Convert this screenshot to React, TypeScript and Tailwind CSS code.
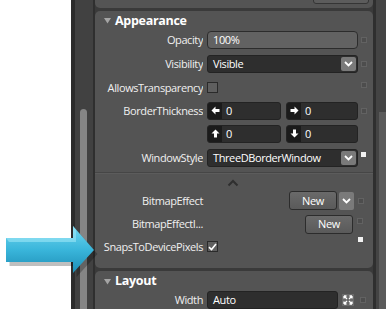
import type { ReactNode } from "react";

function Marker({ white = false }: { white?: boolean }) {
  return white ? (
    <div className="w-[5px] h-[5px] bg-[#f2f2f2]" />
  ) : (
    <div className="w-[6px] h-[6px] border border-[#626262] bg-[#4d4d4d]" />
  );
}

function Chevron({ className = "" }: { className?: string }) {
  return (
    <div className={`w-[15px] h-[14px] rounded-[2px] bg-[#7a7a7a] flex items-center justify-center ${className}`}>
      <svg width="9" height="6" viewBox="0 0 9 6">
        <path d="M1 1 L4.5 4.5 L8 1" stroke="#fff" strokeWidth="1.8" fill="none" />
      </svg>
    </div>
  );
}

function Row({ label, children, marker, className = "" }: { label: string; children?: ReactNode; marker?: ReactNode; className?: string }) {
  return (
    <div className={`flex items-center h-[18px] ${className}`}>
      <div className="w-[108px] text-right whitespace-nowrap overflow-hidden">{label}</div>
      <div className="ml-[4px] w-[151px] h-full flex items-center">{children}</div>
      <div className="ml-[3px] w-[6px] h-full flex items-center">{marker}</div>
    </div>
  );
}

function Arrow({ dir }: { dir: "l" | "r" | "u" | "d" }) {
  const rot = { l: 0, r: 180, u: 90, d: 270 }[dir];
  return (
    <svg width="9" height="9" viewBox="0 0 9 9" style={{ transform: `rotate(${rot}deg)` }}>
      <path d="M0.5 4.5 L4.5 0.5 L4.5 3 L8.5 3 L8.5 6 L4.5 6 L4.5 8.5 Z" fill="#fff" />
    </svg>
  );
}

function Thick({ dir, className = "" }: { dir: "l" | "r" | "u" | "d"; className?: string }) {
  return (
    <div className={`h-full flex rounded-[3px] border border-[#232323] bg-[#2e2e2e] overflow-hidden ${className}`}>
      <div className="w-[14px] h-full bg-[#1b1b1b] flex items-center justify-center">
        <Arrow dir={dir} />
      </div>
      <div className="pl-[4px] flex items-center text-white">0</div>
    </div>
  );
}

function NewButton({ className = "" }: { className?: string }) {
  return (
    <div className={`h-[19px] rounded-[3px] border border-[#2c2c2c] bg-gradient-to-b from-[#6a6a6a] to-[#5a5a5a] flex items-center justify-center text-white ${className}`}>
      New
    </div>
  );
}

function Header({ title, className = "" }: { title: string; className?: string }) {
  return (
    <div className={`flex items-center pl-[9px] ${className}`}>
      <svg width="7" height="7" viewBox="0 0 7 7" className="mr-[4px]">
        <path d="M0 1 L7 1 L3.5 6.5 Z" fill="#a5a5a5" />
      </svg>
      <span className="font-bold text-[12.5px] tracking-[-0.3px] text-white">{title}</span>
    </div>
  );
}

export default function App() {
  return (
    <div className="relative w-[386px] h-[309px] bg-white overflow-hidden flex font-['Open_Sans',sans-serif] text-[11px] tracking-[-0.4px] text-[#f0f0f0]">
      <div className="w-[71px] shrink-0" />

      {/* left scrollbar */}
      <div className="w-[24px] shrink-0 flex">
        <div className="w-[4px] bg-[#2c2c2c]" />
        <div className="w-[18px] bg-[#414141] flex justify-center">
          <div className="mt-[109px] w-[7px] h-[220px] rounded-t-[4px] bg-[#858585] ml-[-2px]" />
        </div>
        <div className="w-[2px] bg-[#2f2f2f]" />
      </div>

      {/* property panel */}
      <div className="w-[278px] shrink-0 bg-[#3a3a3a] flex flex-col">
        <div className="h-[8px] rounded-b-[5px] bg-[#545454] relative">
          <div className="absolute right-[4px] top-[-4px] w-[56px] h-[8px] rounded-[3px] border border-[#353535] bg-[#5c5c5c]" />
        </div>

        <div className="mt-[3px] h-[258px] rounded-[5px] bg-[#545454] flex flex-col">
          <Header title="Appearance" className="h-[20px]" />
          <Row label="Opacity" marker={<Marker />}>
            <div className="w-full h-full rounded-[4px] border border-[#2c2c2c] bg-[#626262] pl-[5px] flex items-center text-white">100%</div>
          </Row>
          <Row label="Visibility" marker={<Marker />} className="mt-[6px]">
            <div className="w-full h-full rounded-[3px] border border-[#232323] bg-[#2e2e2e] pl-[5px] pr-[1px] flex items-center justify-between text-white">
              Visible
              <Chevron />
            </div>
          </Row>
          <Row label="AllowsTransparency" marker={<div className="self-start mt-[3px]"><Marker /></div>} className="mt-[6px]">
            <div className="w-[11px] h-[11px] border border-[#2a2a2a] bg-[#5f5f5f]" />
          </Row>
          <Row label="BorderThickness" marker={<Marker />} className="mt-[5px]">
            <Thick dir="l" className="w-[74px]" />
            <Thick dir="r" className="w-[72px] ml-[5px]" />
          </Row>
          <Row label="" className="mt-[5px]">
            <Thick dir="u" className="w-[74px]" />
            <Thick dir="d" className="w-[72px] ml-[5px]" />
          </Row>
          <Row label="WindowStyle" marker={<div className="self-start mt-[3px]"><Marker white /></div>} className="mt-[6px]">
            <div className="w-full h-full rounded-[3px] border border-[#232323] bg-[#2e2e2e] pl-[5px] pr-[1px] flex items-center justify-between text-white">
              ThreeDBorderWindow
              <Chevron />
            </div>
          </Row>

          <div className="mt-[5px] h-[1px] bg-[#464646]" />
          <div className="h-[1px] bg-[#5c5c5c]" />
          <div className="h-[18px] flex items-center">
            <svg width="12" height="8" viewBox="0 0 12 8" className="ml-[132px]">
              <path d="M1.5 6.5 L6 2 L10.5 6.5" stroke="#2f2f2f" strokeWidth="2" fill="none" />
            </svg>
          </div>

          <div className="h-[18px] flex items-center">
            <div className="w-[108px] text-right">BitmapEffect</div>
            <NewButton className="ml-[86px] w-[48px]" />
            <Chevron className="ml-[2px] h-[18px]" />
            <div className="ml-[4px]"><Marker /></div>
          </div>
          <div className="mt-[5px] h-[19px] flex items-center">
            <div className="w-[108px] text-right whitespace-nowrap">BitmapEffectI...</div>
            <NewButton className="ml-[102px] w-[48px]" />
            <div className="ml-[4px] self-start mt-[3px]"><Marker /></div>
          </div>
          <div className="mt-[4px] h-[18px] flex items-center">
            <div className="w-[108px] text-right whitespace-nowrap">SnapsToDevicePixels</div>
            <div className="ml-[4px] w-[11px] h-[11px] border border-[#2a2a2a] bg-[#5f5f5f] flex items-center justify-center">
              <svg width="9" height="8" viewBox="0 0 9 8">
                <path d="M1 4.2 L3.5 6.5 L8 1" stroke="#fff" strokeWidth="1.6" fill="none" />
              </svg>
            </div>
            <div className="ml-[140px] self-start mt-[-1px]"><Marker white /></div>
          </div>
        </div>

        <div className="mt-[3px] flex-1 rounded-t-[5px] bg-[#545454] flex flex-col">
          <Header title="Layout" className="h-[20px]" />
          <div className="h-[18px] flex items-center">
            <div className="w-[108px] text-right">Width</div>
            <div className="ml-[4px] w-[131px] h-full rounded-[3px] border border-[#232323] bg-[#2e2e2e] pl-[5px] flex items-center text-white">Auto</div>
            <div className="ml-[4px] w-[12px] h-[12px] bg-[#6a6a6a] flex items-center justify-center">
              <svg width="10" height="10" viewBox="0 0 10 10">
                <path d="M1 1 L4 4 M1 1 L1 3.5 M1 1 L3.5 1 M9 1 L6 4 M9 1 L6.5 1 M9 1 L9 3.5 M1 9 L4 6 M1 9 L1 6.5 M1 9 L3.5 9 M9 9 L6 6 M9 9 L9 6.5 M9 9 L6.5 9" stroke="#fff" strokeWidth="1.3" />
              </svg>
            </div>
            <div className="ml-[6px]"><Marker /></div>
          </div>
        </div>
      </div>

      {/* right edge */}
      <div className="flex-1 flex">
        <div className="w-[3px] bg-[#2f2f2f]" />
        <div className="flex-1 bg-[#444444] flex justify-end">
          <div className="mt-[112px] w-[7px] bg-[#5b5b5b]" />
        </div>
      </div>

      {/* callout arrow */}
      <svg className="absolute left-[4px] top-[224px]" width="94" height="54" viewBox="0 0 94 54">
        <defs>
          <linearGradient id="g" x1="0" y1="0" x2="0" y2="1">
            <stop offset="0" stopColor="#6fd6ef" />
            <stop offset="0.5" stopColor="#3ab6db" />
            <stop offset="1" stopColor="#1d8db5" />
          </linearGradient>
        </defs>
        <path d="M4 16 L71 16 L71 4 L92 28 L71 51 L71 40 L4 40 Z" fill="#000" opacity="0.25" transform="translate(1.5 2)" />
        <path d="M2 14 L69 14 L69 2 L90 26 L69 49 L69 38 L2 38 Z" fill="url(#g)" />
        <path d="M2 14 L69 14 L69 2 L72 6 L72 18 L5 18 Z" fill="#9be6f7" opacity="0.6" />
      </svg>
    </div>
  );
}
